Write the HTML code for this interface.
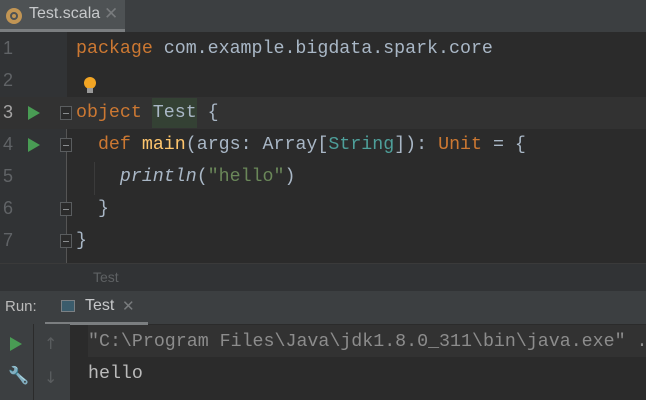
<!DOCTYPE html>
<html><head><style>
*{margin:0;padding:0;box-sizing:border-box}
body{width:646px;height:400px;overflow:hidden;background:#2b2b2b;font-family:"Liberation Mono",monospace;position:relative}
.abs{position:absolute}
.code{font-size:18.3px;line-height:32px;white-space:pre;color:#a9b7c6}
.k{color:#cc7832}.f{color:#ffc66d}.s{color:#6a8759}.t{color:#4e9f9a}
.num{color:#606366;font-size:18px;font-family:"Liberation Sans",sans-serif;left:3px}
.fold{position:absolute;left:60px;width:12px;height:14px;border:1px solid #5a5d5f;background:#2b2b2b}
.fold:after{content:"";position:absolute;left:2px;top:6px;width:6px;height:1px;background:#8a8d8f}
.run{position:absolute;left:28px;width:0;height:0;border-top:7px solid transparent;border-bottom:7px solid transparent;border-left:12px solid #499c54}
</style></head><body>
<div class="abs" style="left:0;top:0;width:646px;height:32px;background:#3c3f41"></div>
<div class="abs" style="left:0;top:0;width:125px;height:32px;background:#4e5254"></div>
<div class="abs" style="left:0;top:29px;width:125px;height:3px;background:#7b7e80"></div>
<div class="abs" style="left:6px;top:8px;width:16px;height:16px;border-radius:50%;background:#c19554"></div>
<div class="abs" style="left:10px;top:12px;width:8px;height:8px;border-radius:50%;border:2px solid #4e5254"></div>
<div class="abs" style="left:29px;top:5px;font-family:'Liberation Sans',sans-serif;font-size:16px;color:#c7c9cb">Test.scala</div>
<div class="abs" style="left:104px;top:4px;font-family:'Liberation Sans',sans-serif;font-size:17px;color:#787b7d">✕</div>
<div class="abs" style="left:0;top:32px;width:67px;height:231px;background:#313335"></div>
<div class="abs" style="left:66px;top:97px;width:1px;height:166px;background:#555"></div>
<div class="abs" style="left:0;top:97px;width:646px;height:32px;background:#323232"></div>
<div class="abs" style="left:152px;top:98px;width:45px;height:30px;background:#344134"></div>
<div class="abs num" style="top:38px">1</div>
<div class="abs num" style="top:70px">2</div>
<div class="abs num" style="top:102px;color:#a4a3a3">3</div>
<div class="abs num" style="top:134px">4</div>
<div class="abs num" style="top:166px">5</div>
<div class="abs num" style="top:198px">6</div>
<div class="abs num" style="top:230px">7</div>
<div class="run" style="top:106px"></div>
<div class="run" style="top:138px"></div>
<div class="fold" style="top:106px"></div>
<div class="fold" style="top:138px"></div>
<div class="fold" style="top:202px"></div>
<div class="fold" style="top:234px"></div>
<div class="abs" style="left:94px;top:162px;width:1px;height:33px;background:#3b3b3b"></div>
<div class="abs" style="left:84px;top:77px;width:12px;height:12px;border-radius:50%;background:#f2a524"></div>
<div class="abs" style="left:87px;top:88px;width:6px;height:5px;background:#9a9a9a"></div>
<div class="abs code" style="left:76px;top:33px"><span class="k">package</span> com.example.bigdata.spark.core</div>
<div class="abs code" style="left:76px;top:97px"><span class="k">object</span> Test {</div>
<div class="abs code" style="left:76px;top:129px">  <span class="k">def</span> <span class="f">main</span>(args: Array[<span class="t">String</span>]): <span class="k">Unit</span> = {</div>
<div class="abs code" style="left:76px;top:161px">    <i>println</i>(<span class="s">"hello"</span>)</div>
<div class="abs code" style="left:76px;top:193px">  }</div>
<div class="abs code" style="left:76px;top:225px">}</div>
<div class="abs" style="left:0;top:263px;width:646px;height:28px;background:#313335;border-top:1px solid #3a3a3a"></div>
<div class="abs" style="left:93px;top:269px;font-family:'Liberation Sans',sans-serif;font-size:14px;color:#5e6163">Test</div>
<div class="abs" style="left:0;top:291px;width:646px;height:33px;background:#3c3f41"></div>
<div class="abs" style="left:5px;top:298px;font-family:'Liberation Sans',sans-serif;font-size:15px;color:#bbb">Run:</div>
<div class="abs" style="left:61px;top:300px;width:14px;height:12px;border:1px solid #7b8084;background:#3b5c6c"></div>
<div class="abs" style="left:85px;top:297px;font-family:'Liberation Sans',sans-serif;font-size:16px;color:#c7c9cb">Test</div>
<div class="abs" style="left:122px;top:297px;font-family:'Liberation Sans',sans-serif;font-size:15px;color:#787b7d">✕</div>
<div class="abs" style="left:45px;top:322px;width:103px;height:3px;background:#7b7e80"></div>
<div class="abs" style="left:0;top:324px;width:33px;height:76px;background:#3c3f41"></div>
<div class="abs" style="left:34px;top:324px;width:36px;height:76px;background:#3c3f41"></div>
<div class="run" style="left:10px;top:337px"></div>
<div class="abs" style="left:8px;top:366px;font-size:17px;color:#aaa;font-family:'DejaVu Sans',sans-serif">🔧</div>
<div class="abs" style="left:44px;top:334px;font-size:16px;color:#5a5d5f;font-family:'DejaVu Sans',sans-serif">↑</div>
<div class="abs" style="left:44px;top:368px;font-size:16px;color:#5a5d5f;font-family:'DejaVu Sans',sans-serif">↓</div>
<div class="abs" style="left:88px;top:325px;width:558px;height:32px;background:#323232"></div>
<div class="abs code" style="left:88px;top:326px;color:#8c8c8c">"C:\Program Files\Java\jdk1.8.0_311\bin\java.exe" ...</div>
<div class="abs code" style="left:88px;top:358px;color:#bbbbbb">hello</div>
</body></html>
